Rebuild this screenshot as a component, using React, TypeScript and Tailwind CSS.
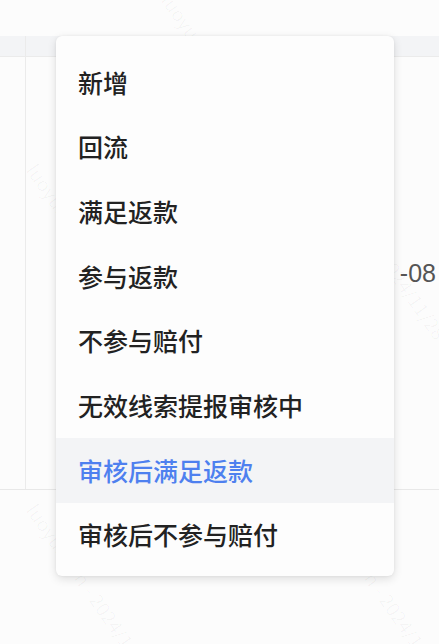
import React from 'react';

const options = [
  '新增',
  '回流',
  '满足返款',
  '参与返款',
  '不参与赔付',
  '无效线索提报审核中',
  '审核后满足返款',
  '审核后不参与赔付',
];

const activeIndex = 6;

// faint diagonal user watermark over the whole page
const marks = [
  { left: 175, top: -10 },
  { left: 470, top: -10 },
  { left: 40, top: 160 },
  { left: 330, top: 160 },
  { left: 175, top: 330 },
  { left: 470, top: 330 },
  { left: 40, top: 500 },
  { left: 330, top: 500 },
];

function Watermark() {
  return (
    <div className="pointer-events-none absolute inset-0 overflow-hidden">
      {marks.map((m, i) => (
        <div
          key={i}
          className="absolute text-[19px] leading-none whitespace-nowrap text-black/[0.03] rotate-[55deg] origin-top-left"
          style={{ left: m.left, top: m.top }}
        >
          luoyunkun - 2024/11/28 17:43:51
        </div>
      ))}
    </div>
  );
}

export default function App() {
  return (
    <div
      className="relative w-[439px] h-[644px] overflow-hidden bg-[#fcfcfc]"
      style={{ fontFamily: '"Noto Sans CJK SC", "Noto Sans", sans-serif' }}
    >
      {/* table behind the dropdown */}
      <div className="pt-[36px]">
        <div className="flex h-[21px] bg-[#f3f4f6] border-b border-[#ebebeb]">
          <div className="w-[26px] border-r border-[#ebebeb]" />
          <div className="flex-1" />
        </div>
        <div className="flex h-[433px] border-b border-[#e8e8e8]">
          <div className="w-[26px] border-r border-[#ebebeb]" />
          <div className="flex-1 flex items-center justify-end pr-[3px] pt-[2px]">
            <span className="text-[25px] text-[#555] font-['Liberation_Sans']">-08</span>
          </div>
        </div>
      </div>

      <Watermark />

      {/* dropdown */}
      <div className="absolute left-[56px] top-[36px] w-[338px] rounded-[6px] bg-[#fdfdfd] pt-[14px] pb-[8px] shadow-[0_3px_10px_rgba(0,0,0,0.12),0_0_3px_rgba(0,0,0,0.06)]">
        {options.map((label, i) => (
          <div
            key={label}
            className={
              i === activeIndex
                ? 'flex items-center h-[64.7px] px-[22px] bg-[#f3f4f6] text-[#4e80ef] text-[25px] font-medium'
                : 'flex items-center h-[64.7px] px-[22px] text-[#222] text-[25px] font-medium'
            }
          >
            {label}
          </div>
        ))}
      </div>
    </div>
  );
}
